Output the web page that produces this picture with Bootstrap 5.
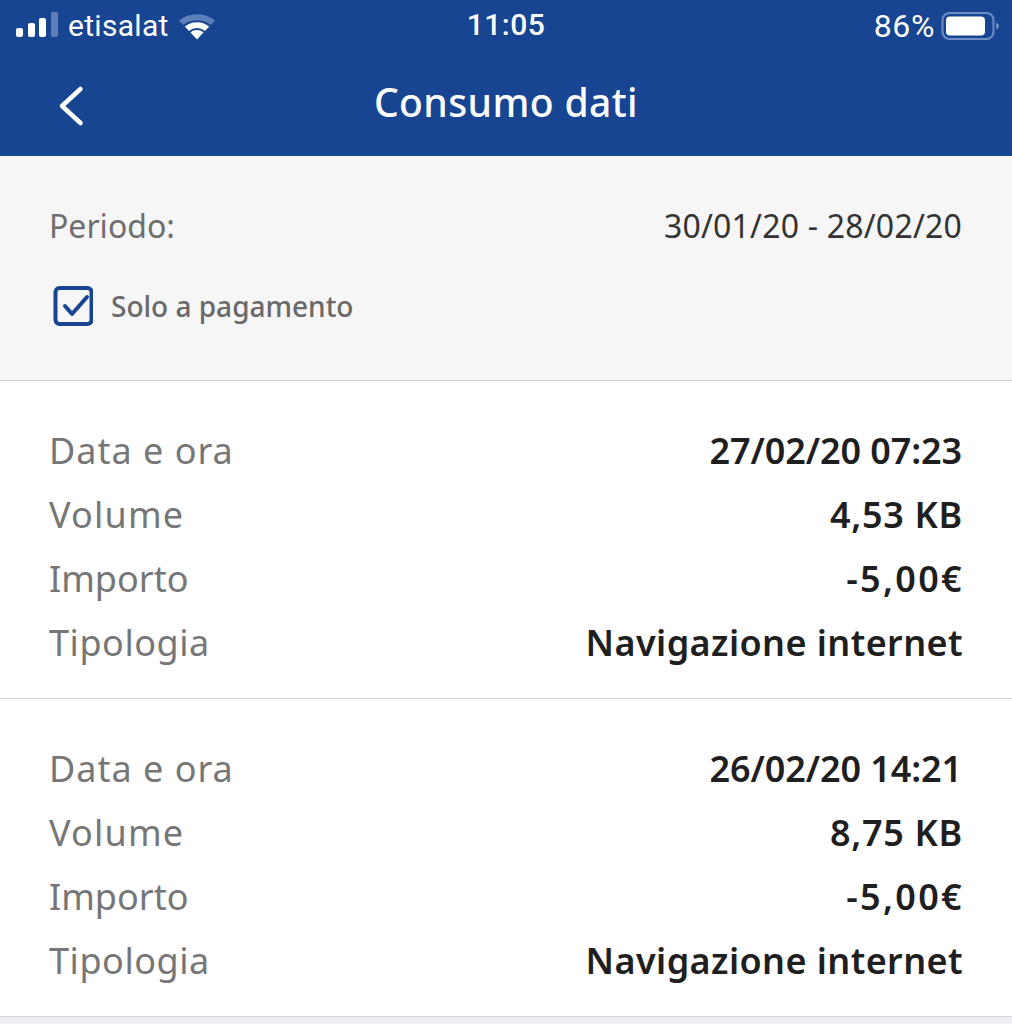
<!doctype html>
<html lang="it"><head><meta charset="utf-8"><title>Consumo dati</title>
<link href="https://cdn.jsdelivr.net/npm/bootstrap@5.3.0/dist/css/bootstrap.min.css" rel="stylesheet">
<style>
html,body{height:1024px;overflow:hidden;background:#f0f0f5}
body{font-family:"Noto Sans","Liberation Sans",sans-serif;width:1012px}
.topbar{background:#174592;height:156px;color:#fff}
.statusline{height:52px;padding:0 13px 0 16px;position:relative;font-family:Roboto,"Liberation Sans",sans-serif;font-size:30px;line-height:52px}
.clock{position:absolute;left:0;right:0;top:-1px;text-align:center;font-weight:500;letter-spacing:.5px}
.batt{font-size:32px;letter-spacing:.6px;margin-right:6px}
.carrier{margin-left:10px;margin-right:9px;letter-spacing:.3px}
.headline{height:104px;padding-left:58px;position:relative}
.headtitle{position:absolute;left:0;right:0;top:25px;text-align:center;font-size:39px;line-height:50px;font-weight:500;letter-spacing:.4px}
.backarrow{display:block;padding-top:33px;box-sizing:content-box}
.filterbox{background:#f6f6f6;height:225px;border-bottom:1px solid #d4d4d4;padding:46px 50px 0 49px}
.periodrow{font-size:32px;line-height:48px;color:#6e6e6e}
.periodrow b{font-weight:400;color:#333;letter-spacing:.2px}
.solo{margin-top:36px;padding-left:4px;gap:18px;font-size:28px;line-height:40px;font-weight:500;color:#696969}
.entry{background:#fff;height:318px;border-bottom:1px solid #d4d4d4;padding:38px 50px 0 49px}
.entryrow{font-size:36px;line-height:64px;color:#767676}
.entryrow b{font-weight:600;color:#1f1f1f}
.ls-date{letter-spacing:1px}
.ls-vol{letter-spacing:1.2px}
.ls-tip{letter-spacing:.55px}
.val-num{letter-spacing:-.1px}
.val-kb{letter-spacing:.7px;margin-right:-1px}
.val-eur{letter-spacing:2.3px;margin-right:-2px}
.val-txt{letter-spacing:.4px;margin-right:-1px}
</style></head><body>
<div class="topbar">
  <div class="statusline d-flex align-items-center justify-content-between">
    <div class="d-flex align-items-center">
      <svg width="42" height="28" viewBox="0 0 42 28"><g fill="#fff"><rect x="0" y="16" width="7" height="9" rx="2"/><rect x="12" y="11" width="7" height="14" rx="2"/><rect x="23" y="6" width="7" height="19" rx="2"/></g><rect x="35" y="0" width="7" height="25" rx="2" fill="#5d80b8"/></svg>
      <span class="carrier">etisalat</span>
      <svg width="38" height="28" viewBox="0 0 38 28"><path d="M1 8.500C11 0 27 0 37 8.500L32.700 13C25 6.800 13 6.800 5.300 13Z" fill="#5d80b8"/><path d="M6.800 14.500C14 8.800 24 8.800 31.200 14.500L27 19C22 15 16 15 11 19Z" fill="#fff"/><path d="M12.500 20.500C16.500 17.300 21.500 17.300 25.500 20.500L19 27.500Z" fill="#fff"/></svg>
    </div>
    <div class="clock">11:05</div>
    <div class="d-flex align-items-center">
      <span class="batt">86%</span>
      <svg width="58" height="30" viewBox="0 0 58 30"><rect x="1.500" y="2" width="51" height="26" rx="7" fill="none" stroke="#6f8fc2" stroke-width="2"/><rect x="5" y="5.500" width="39" height="19" rx="4" fill="#fff"/><path d="M55 11.500c2 .7 3 2 3 3.500s-1 2.800-3 3.500Z" fill="#6f8fc2"/></svg>
    </div>
  </div>
  <div class="headline">
    <svg class="backarrow" width="28" height="42" viewBox="0 0 28 42"><path d="M22.500 4 4 21l18.500 17" fill="none" stroke="#fff" stroke-width="4.500" stroke-linecap="round" stroke-linejoin="round"/></svg>
    <div class="headtitle">Consumo dati</div>
  </div>
</div>
<div class="filterbox">
  <div class="periodrow d-flex justify-content-between"><span>Periodo:</span><b>30/01/20 - 28/02/20</b></div>
  <div class="solo d-flex align-items-center">
    <svg width="40" height="40" viewBox="0 0 40 40"><rect x="2.500" y="2" width="36" height="36" rx="4" fill="none" stroke="#174592" stroke-width="4"/><path d="M12 20 19 28 34 11" fill="none" stroke="#174592" stroke-width="4" stroke-linecap="round" stroke-linejoin="round"/></svg>
    <span>Solo a pagamento</span>
  </div>
</div>
<div class="entry">
  <div class="entryrow d-flex justify-content-between"><span class="ls-date">Data e ora</span><b class="val-num">27/02/20 07:23</b></div>
  <div class="entryrow d-flex justify-content-between"><span class="ls-vol">Volume</span><b class="val-kb">4,53 KB</b></div>
  <div class="entryrow d-flex justify-content-between"><span>Importo</span><b class="val-eur">-5,00€</b></div>
  <div class="entryrow d-flex justify-content-between"><span class="ls-tip">Tipologia</span><b class="val-txt">Navigazione internet</b></div>
</div>
<div class="entry">
  <div class="entryrow d-flex justify-content-between"><span class="ls-date">Data e ora</span><b class="val-num">26/02/20 14:21</b></div>
  <div class="entryrow d-flex justify-content-between"><span class="ls-vol">Volume</span><b class="val-kb">8,75 KB</b></div>
  <div class="entryrow d-flex justify-content-between"><span>Importo</span><b class="val-eur">-5,00€</b></div>
  <div class="entryrow d-flex justify-content-between"><span class="ls-tip">Tipologia</span><b class="val-txt">Navigazione internet</b></div>
</div>
</body></html>
